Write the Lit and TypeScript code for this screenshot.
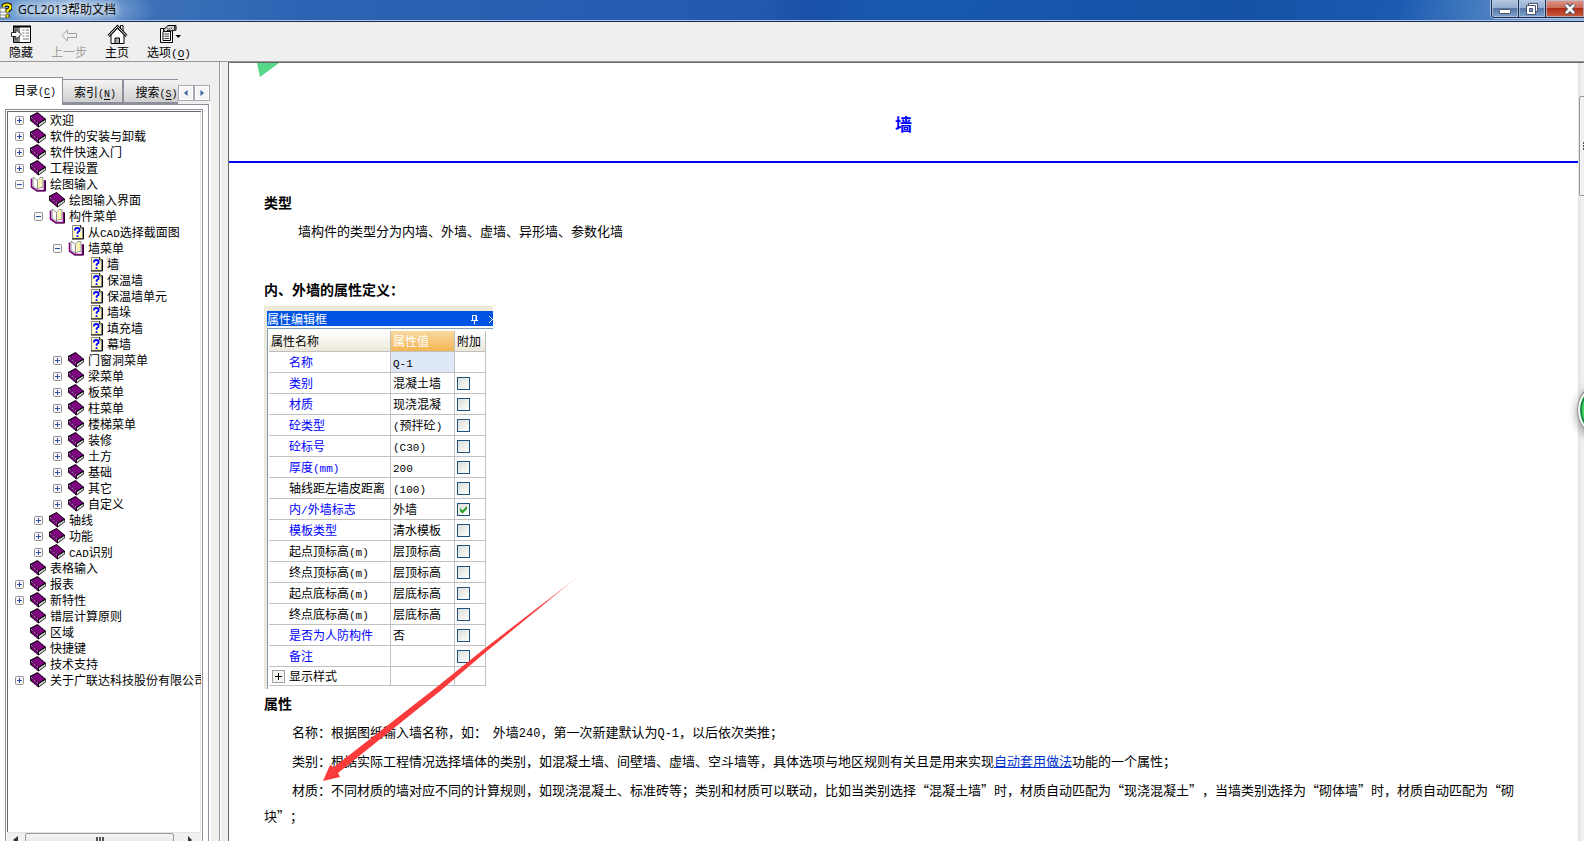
import { LitElement, html, css, nothing } from "lit";
import { customElement, state } from "lit/decorators.js";
import { classMap } from "lit/directives/class-map.js";

type Kind = "book" | "topic";

interface TreeNode {
  label: string;
  kind?: Kind;
  open?: boolean;
  selected?: boolean;
  expandable?: boolean;
  children?: TreeNode[];
}

interface PropertyRow {
  name: string;
  value: string;
  editable?: boolean;
  checked?: boolean;
}

const closed = (label: string): TreeNode => ({ label, expandable: true });
const leaf = (label: string, kind: Kind = "book"): TreeNode => ({ label, kind });

const TREE: TreeNode[] = [
  closed("欢迎"),
  closed("软件的安装与卸载"),
  closed("软件快速入门"),
  closed("工程设置"),
  {
    label: "绘图输入",
    expandable: true,
    open: true,
    children: [
      leaf("绘图输入界面"),
      {
        label: "构件菜单",
        expandable: true,
        open: true,
        children: [
          leaf("从CAD选择截面图", "topic"),
          {
            label: "墙菜单",
            expandable: true,
            open: true,
            children: [
              { label: "墙", kind: "topic", selected: true },
              leaf("保温墙", "topic"),
              leaf("保温墙单元", "topic"),
              leaf("墙垛", "topic"),
              leaf("填充墙", "topic"),
              leaf("幕墙", "topic"),
            ],
          },
          closed("门窗洞菜单"),
          closed("梁菜单"),
          closed("板菜单"),
          closed("柱菜单"),
          closed("楼梯菜单"),
          closed("装修"),
          closed("土方"),
          closed("基础"),
          closed("其它"),
          closed("自定义"),
        ],
      },
      closed("轴线"),
      closed("功能"),
      closed("CAD识别"),
    ],
  },
  leaf("表格输入"),
  closed("报表"),
  closed("新特性"),
  leaf("错层计算原则"),
  leaf("区域"),
  leaf("快捷键"),
  leaf("技术支持"),
  closed("关于广联达科技股份有限公司"),
];

const ROWS: PropertyRow[] = [
  { name: "类别", value: "混凝土墙", editable: true },
  { name: "材质", value: "现浇混凝", editable: true },
  { name: "砼类型", value: "(预拌砼)", editable: true },
  { name: "砼标号", value: "(C30)", editable: true },
  { name: "厚度(mm)", value: "200", editable: true },
  { name: "轴线距左墙皮距离", value: "(100)" },
  { name: "内/外墙标志", value: "外墙", editable: true, checked: true },
  { name: "模板类型", value: "清水模板", editable: true },
  { name: "起点顶标高(m)", value: "层顶标高" },
  { name: "终点顶标高(m)", value: "层顶标高" },
  { name: "起点底标高(m)", value: "层底标高" },
  { name: "终点底标高(m)", value: "层底标高" },
  { name: "是否为人防构件", value: "否", editable: true },
  { name: "备注", value: "", editable: true },
];

const mixed = (text: string) =>
  text
    .split(/([\x21-\x7e]+)/)
    .filter((part) => part !== "")
    .map((part) =>
      /^[\x21-\x7e]/.test(part) ? html`<span class="latin">${part}</span>` : part
    );

const closedBook = html`<svg class="icon" viewBox="0 0 16 16" aria-hidden="true">
  <path d="M7.500 0 16 7V10L8.500 15.500 0 8.500V4z" fill="#000" />
  <path d="M7.500 1 14.800 6.800 8.500 11 1.600 4.500z" fill="#800080" />
  <path d="M.8 5 8 11.600v2.800L.8 8z" fill="#800080" />
  <path d="M1 5 8.200 11.400" stroke="#f0dcf0" stroke-dasharray="1 1" />
  <path d="M9 12 15.300 8v1.700L9 14.300z" fill="#fff" />
  <path d="M9.500 13 15 9.300" stroke="#888" stroke-width=".6" />
</svg>`;

const openBook = html`<svg class="icon" viewBox="0 0 16 16" aria-hidden="true">
  <path d="M1.500 3.500V11l5 4h9V4.500" fill="#fff" stroke="#000" />
  <path d="M1.500 2.500v8.500l5 3.500h8V4" fill="none" stroke="#800080" stroke-width="1.600" />
  <path d="M3 1 7.500 4.500v9L3 10z" fill="#fff" stroke="#777" stroke-width=".8" />
  <path d="M7.500 4.500 10 1.500h3v10h-3l-2.500 2z" fill="#fffbe0" stroke="#777" stroke-width=".8" />
  <path d="M9.500 4.500v7M11.500 3v8" stroke="#f5e13c" stroke-dasharray="1 1" />
</svg>`;

const topicIcon = html`<svg class="icon" viewBox="0 0 16 16" aria-hidden="true">
  <path d="M4.500 1.500h8l2 2v11h-10z" fill="#fffde0" stroke="#888" />
  <path d="M4 15h11.500V3.500" fill="none" stroke="#000" />
  <path d="M12.500 1v3H15" fill="none" stroke="#000" stroke-width=".8" />
  <path d="M6 3h5M6 13.500h7M5.500 5v8M13 6v7" stroke="#fff04a" stroke-dasharray="1 1" />
  <path d="M7 6.500V5.200Q7.200 4 9.300 4t2.400 1.700Q11.700 7 10.300 7.800 9.500 8.300 9.500 9.800M9.500 11.300V13" fill="none" stroke="#00f" stroke-width="1.800" />
</svg>`;

@customElement("app-root")
export class AppRoot extends LitElement {
  @state() private tree: TreeNode[] = TREE;

  static styles = css`
    :host {
      display: flex;
      flex-direction: column;
      position: relative;
      height: 100vh;
      overflow: hidden;
      background: #efefef;
      color: #000;
      font-family: "Noto Sans CJK SC", sans-serif;
      font-size: 12px;
      line-height: 16px;
      text-spacing-trim: space-all;
    }
    * { box-sizing: border-box; }
    button {
      font: inherit;
      color: inherit;
      padding: 0;
      border: 0;
      background: none;
    }
    .latin {
      font-family: "Liberation Mono", monospace;
      font-size: 11px;
      line-height: 1;
    }

    .titlebar {
      flex: none;
      display: flex;
      align-items: flex-start;
      height: 22px;
      border-bottom: 1px solid #1b2c4d;
      box-shadow: inset 0 -1px #a9c3e8;
      background:
        radial-gradient(ellipse 90px 26px at 66px 10px, #ffffff99, #ffffff00),
        linear-gradient(100deg, #4a86c8 0, #3b70b8 10%, #2d62b4 20%, #2559ae 48%, #1a50a8 51%, #175aae 56%, #1552a6 78%, #1a5ab0 88%, #4c80c2 94%, #9cb8dc 100%);
    }
    .app-icon { width: 12px; height: 20px; }
    .title {
      flex: 1;
      margin: 0;
      padding-left: 6px;
      font: 400 12px/20px "Open Sans", "Noto Sans CJK SC", sans-serif;
      text-shadow: 0 0 6px #fff, 0 0 8px #fff;
    }
    .window-buttons {
      display: flex;
      height: 18px;
      border: solid #1d2f4e;
      border-width: 0 0 1px 1px;
      border-radius: 0 0 0 4px;
      overflow: hidden;
      box-shadow: 0 0 0 1px #a9c3e8;
    }
    .window-buttons button {
      display: flex;
      align-items: center;
      justify-content: center;
      width: 27px;
      height: 17px;
      border-right: 1px solid #1d2f4e;
      box-shadow: inset 0 0 0 1px #b9cce6aa;
      background: linear-gradient(#b3c6df 0, #96b0d2 45%, #5879a8 50%, #7fa2cd 100%);
    }
    .window-buttons .close {
      width: 38px;
      padding-left: 10px;
      border-right: 0;
      background: linear-gradient(#dd9a8c 0, #cc6b58 45%, #b22d18 50%, #c95f40 100%);
    }

    .toolbar {
      flex: none;
      display: flex;
      height: 40px;
      border-bottom: 1px solid #989898;
    }
    .toolbar button {
      display: flex;
      flex-direction: column;
      align-items: center;
      padding: 2px 9px 0;
      line-height: 16px;
    }
    .toolbar button:disabled { color: #a0a0a0; }
    .toolbar svg { width: 24px; height: 20px; }
    u { text-underline-offset: 2px; }

    .body {
      flex: 1;
      min-height: 0;
      display: grid;
      grid-template-columns: 220px 8px minmax(0, 1fr);
    }

    .sidebar {
      display: flex;
      flex-direction: column;
      min-height: 0;
      padding-top: 15px;
      border-right: 1px solid #989898;
    }
    .tabs {
      display: flex;
      align-items: flex-end;
      height: 27px;
      padding-right: 9px;
    }
    .tabs .latin { font-size: 10px; }
    .tabs .tab {
      height: 25px;
      padding: 2px 6px 0 11px;
      border: solid #8e8f9c;
      border-width: 1px 2px 2px 0;
      background: linear-gradient(#f4f4f4, #cfcfcf);
      white-space: nowrap;
    }
    .tabs .tab.active {
      height: 27px;
      padding: 0 6px 2px 14px;
      border-width: 1px 1px 0 0;
      background: #fff;
    }
    .tabs .tab.cut {
      flex: 1;
      min-width: 0;
      padding-right: 0;
      border-right: 0;
      overflow: hidden;
    }
    .spin {
      display: flex;
      align-self: flex-end;
      padding-bottom: 3px;
    }
    .spin button {
      display: grid;
      place-items: center;
      width: 16px;
      height: 16px;
      border: 1px solid #a8a8b4;
      background: #f4f4f4;
      box-shadow: inset 0 0 0 1px #fff;
    }
    .page {
      flex: 1;
      min-height: 0;
      display: flex;
      margin-right: 8px;
      padding: 5px 0 0 5px;
      background: linear-gradient(90deg, #8e8f9c, #8e8f9c) no-repeat 62px 0 / 147px 1px, #fff;
    }
    .tree-frame {
      flex: 1;
      min-width: 0;
      display: flex;
      flex-direction: column;
      border: 1px solid #8e8f9c;
      border-bottom: 0;
      padding: 1px 1px 0;
    }
    .tree-edge {
      width: 6px;
      margin: -4px 2px 0 0;
      border-right: 1px solid #8e8f9c;
    }
    .tree {
      flex: 1;
      min-height: 0;
      margin: 0;
      padding: 0;
      border: solid #696969;
      border-width: 1px 0 0 1px;
      box-shadow: inset -1px 0 #e3e3e3;
      overflow: hidden;
      list-style: none;
    }
    .tree ul {
      margin: 0;
      padding: 0 0 0 19px;
      list-style: none;
    }
    .row {
      display: flex;
      align-items: center;
      height: 16px;
      padding-left: 7px;
      white-space: nowrap;
    }
    .expander, .no-expander {
      flex: none;
      width: 9px;
      height: 9px;
      margin-right: 6px;
    }
    .expander { display: flex; }
    .icon {
      flex: none;
      width: 16px;
      height: 16px;
      margin-right: 3px;
    }
    .label {
      padding: 0 1px;
      color: inherit;
      text-decoration: none;
      line-height: 16px;
    }
    .label.selected { background: #efefef; }

    .hscroll {
      flex: none;
      display: flex;
      height: 9px;
      overflow: hidden;
      background: #f0f0f0;
      border-top: 1px solid #e3e3e3;
    }
    .hscroll svg { flex: none; width: 18px; height: 16px; }
    .hthumb {
      display: flex;
      justify-content: center;
      width: 149px;
      height: 16px;
      padding-top: 3px;
      border: 1px solid #979797;
      border-radius: 2px;
      background: linear-gradient(#f6f6f6, #dcdcdc);
    }
    .grip {
      width: 8px;
      height: 7px;
      background: repeating-linear-gradient(90deg, #555 0 2px, #eee 2px 3px);
    }

    .splitter {
      border-left: 1px solid #fff;
      background: #efefef;
    }

    .viewer {
      display: grid;
      grid-template-columns: minmax(0, 1fr) 6px;
      min-height: 0;
      border: solid #696969;
      border-width: 1px 0 0 1px;
      background: #fff;
    }
    .document {
      position: relative;
      overflow: hidden;
      font-size: 13px;
      line-height: 26px;
    }
    .document p .latin { font-size: 12px; }
    .stamp {
      position: absolute;
      left: 28px;
      top: 0;
      width: 22px;
      height: 14px;
    }
    .doc-head {
      height: 100px;
      padding-top: 48px;
      border-bottom: 2px solid #00f;
    }
    .doc-head h1 {
      margin: 0;
      color: #00f;
      font-size: 17px;
      line-height: 26px;
      text-align: center;
    }
    .content { padding: 26px 58px 0 35px; }
    .content h2 {
      margin: 0 0 3px;
      font-size: 14px;
      line-height: 26px;
    }
    .content p {
      margin: 0 0 3px;
      text-indent: 28px;
    }
    .content .lead {
      margin-bottom: 32px;
      text-indent: 34px;
    }
    .content a { color: #0033cc; }

    .panel {
      width: 229px;
      height: 383px;
      margin: 4px 0 1px;
      padding: 5px 0 0 3px;
      background: #ece9d8;
      font-size: 12px;
      line-height: 16px;
    }
    .panel-inner { height: 100%; background: #fff; }
    .panel-title {
      display: flex;
      align-items: center;
      height: 15px;
      background: #0054e3;
      color: #fff;
    }
    .panel-title span { flex: 1; }
    .panel-title svg { width: 26px; height: 15px; }
    .panel-body {
      height: 361px;
      padding: 2px 0 0 1px;
      margin-top: 2px;
      border: solid #7f9db9;
      border-width: 1px 0 0 1px;
    }
    table {
      width: 217px;
      border-collapse: separate;
      border-spacing: 0;
      table-layout: fixed;
    }
    th, td {
      height: 21px;
      padding: 0 2px;
      border: solid #c0c0c0;
      border-width: 0 1px 1px 0;
      font-weight: 400;
      line-height: 16px;
      text-align: left;
      white-space: nowrap;
      overflow: hidden;
    }
    .col-name { width: 122px; }
    .col-value { width: 64px; }
    .col-extra { width: 31px; }
    thead th { background: linear-gradient(#fff, #ebe8d8); }
    thead .current {
      background: linear-gradient(#f9d9a0, #f2b552);
      color: #fff;
    }
    tbody th { padding-left: 20px; }
    .editable { color: #00f; }
    .focused { background: #dfe8f6; }
    .style-row th, .style-row td { height: 19px; }
    .style-row th { padding-left: 3px; }
    .style-cell { display: flex; align-items: center; gap: 4px; }
    .style-cell button {
      display: flex;
      width: 13px;
      height: 13px;
    }
    .check {
      display: grid;
      width: 13px;
      height: 13px;
    }
    .check > * { grid-area: 1 / 1; }
    .check svg { width: 13px; height: 13px; pointer-events: none; z-index: 1; }
    input[type="checkbox"] {
      appearance: none;
      width: 13px;
      height: 13px;
      margin: 0;
      border: 1px solid #1c5180;
      background: linear-gradient(135deg, #dcdcd7, #fff);
    }

    .vscroll {
      overflow: hidden;
      padding: 33px 0 0 1px;
      background: linear-gradient(90deg, #e3e3e3, #f0f0f0 4px);
    }
    .vthumb {
      display: flex;
      align-items: center;
      width: 15px;
      height: 100px;
      padding-left: 3px;
      border: 1px solid #979797;
      border-radius: 2px;
      background: linear-gradient(90deg, #f6f6f6, #dcdcdc);
    }
    .vthumb i {
      width: 7px;
      height: 8px;
      background: repeating-linear-gradient(#555 0 2px, #eee 2px 3px);
    }

    .arrow {
      position: absolute;
      left: 84px;
      top: 512px;
      width: 270px;
      height: 212px;
      pointer-events: none;
    }
    .bubble {
      position: absolute;
      right: -50px;
      top: 382px;
      width: 56px;
      height: 56px;
      border: 2px solid #f4f4f4;
      border-radius: 50%;
      background: #48d860;
      box-shadow: 0 0 0 1px #8a8a8a, inset 0 0 0 2px #16864a, 0 3px 8px 2px #00000055;
    }
  `;

  private toggle(node: TreeNode) {
    node.open = !node.open;
    this.tree = [...this.tree];
  }

  private renderNode(node: TreeNode): unknown {
    const icon =
      node.kind === "topic" ? topicIcon : node.open ? openBook : closedBook;
    return html`<li>
      <div class="row">
        ${node.expandable
          ? html`<button
              class="expander"
              aria-label=${node.label}
              aria-expanded=${node.open ? "true" : "false"}
              @click=${() => this.toggle(node)}
            >
              <svg width="9" height="9" viewBox="0 0 9 9" aria-hidden="true">
                <rect x=".5" y=".5" width="8" height="8" rx="1" fill="#f6f6f6" stroke="#919191" />
                <path d=${node.open ? "M2 4.500h5" : "M2 4.500h5M4.500 2v5"} stroke="#2a4ea8" />
              </svg>
            </button>`
          : html`<span class="no-expander"></span>`}
        ${icon}
        <a href="#" class=${classMap({ label: true, selected: !!node.selected })}
          >${mixed(node.label)}</a>
      </div>
      ${node.open && node.children
        ? html`<ul>${node.children.map((c) => this.renderNode(c))}</ul>`
        : nothing}
    </li>`;
  }

  private renderTitlebar() {
    return html`<header class="titlebar">
      <svg class="app-icon" viewBox="0 0 12 20" aria-hidden="true">
        <path d="M0 8h5l2 3v7H0z" fill="#fff" stroke="#777" />
        <path d="M0 12h5M0 15h5" stroke="#888" />
        <path d="M3.500 7Q3.500 4.500 7 4.500t3.500 2.600Q10.500 9.500 7.500 10.200V12.500M7.500 14.500v3" fill="none" stroke="#000" stroke-width="4" />
        <path d="M3.500 7Q3.500 4.500 7 4.500t3.500 2.600Q10.500 9.500 7.500 10.200V12.500M7.500 14.500v3" fill="none" stroke="#ffeb00" stroke-width="2.200" />
      </svg>
      <h1 class="title">GCL2013帮助文档</h1>
      <div class="window-buttons">
        <button aria-label="最小化">
          <svg width="14" height="14" viewBox="0 0 14 14"><rect x="1.500" y="7.500" width="11" height="4" rx="1" fill="#fff" stroke="#47536b" /></svg>
        </button>
        <button aria-label="还原">
          <svg width="14" height="14" viewBox="0 0 14 14">
            <path d="M3.500 1.500h9v8h-9z" fill="#fff" stroke="#47536b" />
            <path d="M1.500 3.500h9v9h-9z" fill="#fff" stroke="#47536b" />
            <path d="M4.500 6.500h3v3h-3z" fill="#7fa2cd" stroke="#47536b" />
          </svg>
        </button>
        <button class="close" aria-label="关闭">
          <svg width="14" height="12" viewBox="0 0 14 12">
            <path d="M3 1.500 11 10.500M11 1.500 3 10.500" stroke="#47536b" stroke-width="4.500" />
            <path d="M3 1.800 11 10.200M11 1.800 3 10.200" stroke="#fff" stroke-width="2.600" />
          </svg>
        </button>
      </div>
    </header>`;
  }

  private renderToolbar() {
    return html`<nav class="toolbar">
      <button>
        <svg viewBox="0 0 24 20" aria-hidden="true">
          <path d="M4.500 2.500h17v16h-17z" fill="#fff" stroke="#000" />
          <path d="M5 3h6v15H5z" fill="#808080" />
          <path d="M4 2.500h18" stroke="#000" stroke-width="2" />
          <path d="M13.500 6h2M17 6h3M13.500 9h2M17 9h3M13.500 12h2M17 12h3M14 15h6" stroke="#777" />
          <path d="M2.500 8.500H7V5.500L12 10.500 7 15.500V12.500H2.500z" fill="#fff" stroke="#000" stroke-width=".8" />
        </svg>
        隐藏
      </button>
      <button disabled>
        <svg viewBox="0 0 24 20" aria-hidden="true">
          <path d="M5 11.500 10.500 6V9.500H19.500V13.500H10.500V17z" fill="none" stroke="#a0a0a0" />
        </svg>
        上一步
      </button>
      <button>
        <svg viewBox="0 0 24 20" aria-hidden="true">
          <path d="M6 10.500V19.500H19V10.500L12.500 4z" fill="#fff" stroke="#000" />
          <path d="M15.500 1.500h2.500V7l-2.500-2.500z" fill="#fff" stroke="#000" />
          <path d="M3.500 12 12.500 2.500 21.500 12" fill="none" stroke="#000" stroke-width="2.800" />
          <path d="M3.500 12 12.500 2.500 21.500 12" fill="none" stroke="#fff" stroke-width="1" />
          <path d="M10 19.500V14h4.500v5.500z" fill="#aaa" stroke="#000" />
        </svg>
        主页
      </button>
      <button>
        <svg viewBox="0 0 24 20" aria-hidden="true">
          <path d="M3.500 4.500h12v14h-12z" fill="#fff" stroke="#000" />
          <path d="M6 7.500h7.500v9H6z" fill="#fff" stroke="#000" />
          <path d="M7.500 10h4.500M7.500 12.200h4.500M7.500 14.500h4.500" stroke="#000" stroke-width=".8" />
          <path d="M6 6 11 1.500h8v4.500l-5 1-3-1-2 2z" fill="#ccc" stroke="#000" />
          <path d="M10 4.500h6" stroke="#555" stroke-dasharray="1 1" />
          <path d="M18 2v5" stroke="#444" stroke-width="2" />
          <path d="M18.500 11h5.500l-2.700 3z" fill="#000" />
        </svg>
        <span>选项<span class="latin">(<u>O</u>)</span></span>
      </button>
    </nav>`;
  }

  private renderSidebar() {
    return html`<aside class="sidebar">
      <div class="tabs" role="tablist">
        <button class="tab active" role="tab" aria-selected="true">
          目录<span class="latin">(<u>C</u>)</span>
        </button>
        <button class="tab" role="tab">索引<span class="latin">(<u>N</u>)</span></button>
        <button class="tab cut" role="tab">搜索<span class="latin">(<u>S</u>)</span></button>
        <div class="spin">
          <button aria-label="向左">
            <svg width="6" height="6" viewBox="0 0 6 6"><path d="M4.500 0v6L1 3z" fill="#3b5ea8" /></svg>
          </button>
          <button aria-label="向右">
            <svg width="6" height="6" viewBox="0 0 6 6"><path d="M1.500 0v6L5 3z" fill="#3b5ea8" /></svg>
          </button>
        </div>
      </div>
      <div class="page">
        <div class="tree-frame">
          <ul class="tree">${this.tree.map((n) => this.renderNode(n))}</ul>
          <div class="hscroll">
            <svg viewBox="0 0 18 16" aria-hidden="true"><path d="M11 3v8L6 7z" fill="#333" /></svg>
            <div class="hthumb"><span class="grip"></span></div>
            <svg viewBox="0 0 18 16" aria-hidden="true"><path d="M14 3v8l4-4z" fill="#333" /></svg>
          </div>
        </div>
        <div class="tree-edge"></div>
      </div>
    </aside>`;
  }

  private renderPanel() {
    return html`<section class="panel">
      <div class="panel-inner">
        <div class="panel-title">
          <span>属性编辑框</span>
          <svg viewBox="0 0 26 15" aria-hidden="true">
            <path d="M5.500 4.500h4v5M4 9.500h7M7.500 10v3.500M9 4.500v5" fill="none" stroke="#fff" />
            <path d="M5.500 4.500v5" stroke="#fff" />
            <path d="M22 5l7 7M22 12l7-7" stroke="#fff" />
          </svg>
        </div>
        <div class="panel-body">
          <table>
            <colgroup>
              <col class="col-name" />
              <col class="col-value" />
              <col class="col-extra" />
            </colgroup>
            <thead>
              <tr>
                <th scope="col">属性名称</th>
                <th scope="col" class="current">属性值</th>
                <th scope="col">附加</th>
              </tr>
            </thead>
            <tbody>
              <tr>
                <th scope="row" class="editable">名称</th>
                <td class="focused">${mixed("Q-1")}</td>
                <td></td>
              </tr>
              ${ROWS.map(
                (row) => html`<tr>
                  <th scope="row" class=${classMap({ editable: !!row.editable })}>${mixed(row.name)}</th>
                  <td>${mixed(row.value)}</td>
                  <td>
                    <label class="check">
                      <input type="checkbox" aria-label=${row.name} .checked=${!!row.checked} />
                      ${row.checked
                        ? html`<svg viewBox="0 0 13 13" aria-hidden="true">
                            <path d="M3 5v3l2.500 2.500L10 6V3L5.500 7.500z" fill="#21a121" />
                          </svg>`
                        : nothing}
                    </label>
                  </td>
                </tr>`
              )}
              <tr class="style-row">
                <th scope="row">
                  <div class="style-cell">
                    <button aria-label="展开显示样式">
                      <svg width="13" height="13" viewBox="0 0 13 13">
                        <rect x=".5" y=".5" width="12" height="12" fill="#f4f4f0" stroke="#a0a0a0" />
                        <path d="M3 6.500h7M6.500 3v7" stroke="#000" />
                      </svg>
                    </button>
                    显示样式
                  </div>
                </th>
                <td></td>
                <td></td>
              </tr>
            </tbody>
          </table>
        </div>
      </div>
    </section>`;
  }

  private renderDocument() {
    return html`<main class="document">
      <svg class="stamp" viewBox="0 0 22 14" aria-hidden="true">
        <path d="M0 0h22L3 14z" fill="#55d888" />
      </svg>
      <div class="doc-head"><h1>墙</h1></div>
      <div class="content">
        <h2>类型</h2>
        <p class="lead">墙构件的类型分为内墙、外墙、虚墙、异形墙、参数化墙</p>
        <h2>内、外墙的属性定义：</h2>
        ${this.renderPanel()}
        <h2>属性</h2>
        <p>名称：根据图纸输入墙名称，如：&nbsp; 外墙${mixed("240")}，第一次新建默认为${mixed("Q-1")}，以后依次类推；</p>
        <p>类别：根据实际工程情况选择墙体的类别，如混凝土墙、间壁墙、虚墙、空斗墙等，具体选项与地区规则有关且是用来实现<a href="#">自动套用做法</a>功能的一个属性；</p>
        <p>材质：不同材质的墙对应不同的计算规则，如现浇混凝土、标准砖等；类别和材质可以联动，比如当类别选择“混凝土墙”时，材质自动匹配为“现浇混凝土”，当墙类别选择为“砌体墙”时，材质自动匹配为“砌块”；</p>
      </div>
      <svg class="arrow" viewBox="0 0 270 212" aria-hidden="true">
        <defs>
          <linearGradient id="fade" x1="0" y1="1" x2="1" y2="0">
            <stop offset=".85" stop-color="#fb3b3b" />
            <stop offset="1" stop-color="#fb3b3b" stop-opacity=".2" />
          </linearGradient>
        </defs>
        <path d="M10 206 17 190 21 192 120 115 171 74 267 0 174 76 126 117 25 198 27 202z" fill="url(#fade)" />
      </svg>
    </main>`;
  }

  render() {
    return html`
      ${this.renderTitlebar()} ${this.renderToolbar()}
      <div class="body">
        ${this.renderSidebar()}
        <div class="splitter"></div>
        <div class="viewer">
          ${this.renderDocument()}
          <div class="vscroll"><div class="vthumb"><i></i></div></div>
        </div>
      </div>
      <div class="bubble"></div>
    `;
  }
}
